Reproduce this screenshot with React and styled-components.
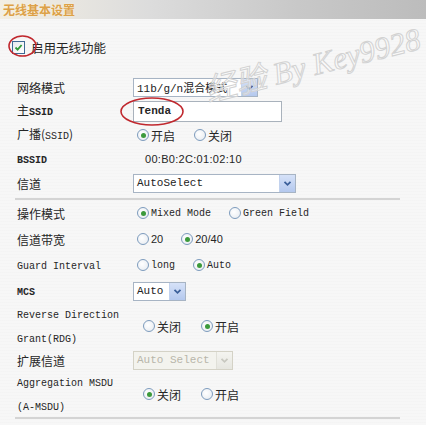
import React from 'react'
import styled, { createGlobalStyle } from 'styled-components'

const GlobalStyle = createGlobalStyle`
  html, body { margin: 0; padding: 0; background: #f6f6f6; }
  body { font-family: "Noto Sans CJK SC", "Liberation Sans", sans-serif; color: #262626; }
`

const Page = styled.div`
  position: relative;
  width: 426px;
  height: 425px;
  overflow: hidden;
  background: repeating-linear-gradient(to bottom, #f7f7f7 0px, #f7f7f7 2px, #f2f2f2 3px);
`

const TitleBar = styled.div`
  height: 19px;
  padding-left: 3px;
  display: flex;
  align-items: center;
  font-size: 12px;
  font-weight: bold;
  color: #dca148;
  text-shadow: 0 0 2px #fff3d8;
  background: linear-gradient(to right, #f3efe4 0%, #dcdcdc 35%, #c8c8c8 70%, #bcbcbc 100%);
`

const EnableRow = styled.div`
  height: 56px;
  display: flex;
  align-items: center;
  padding-left: 12px;
  gap: 6px;
  font-size: 12.5px;
`

const Mark = styled.span`
  position: relative;
  display: inline-flex;
`

const Ellipse = styled.svg`
  position: absolute;
  left: ${p => p.$x}px;
  top: ${p => p.$y}px;
  pointer-events: none;
  overflow: visible;
`

const Checkbox = styled.span`
  width: 11px;
  height: 11px;
  border: 1px solid #3f6a95;
  background: linear-gradient(135deg, #e6eaee, #ffffff);
  display: inline-flex;
  align-items: center;
  justify-content: center;
`

const Row = styled.div`
  height: ${p => p.$h || 24}px;
  display: flex;
  align-items: center;
  padding-left: 17px;
`

const Label = styled.div`
  width: 116px;
  flex: none;
  font-size: 12px;
  line-height: 21px;
`

const Mono = styled.span`
  font-family: "Liberation Mono", monospace;
  font-size: 10px;
  font-weight: ${p => (p.$bold ? 'bold' : 'normal')};
`

const Divider = styled.div`
  height: 2px;
  width: 385px;
  margin: ${p => p.$mt || 0}px 0 0 15px;
  background: #d4d4d4;
`

const SelectBox = styled.div`
  width: ${p => p.$w}px;
  height: 19px;
  box-sizing: border-box;
  display: flex;
  align-items: center;
  background: ${p => (p.$disabled ? '#f3f3ee' : '#fff')};
  border: 1px solid ${p => (p.$disabled ? '#d4d2c6' : '#a7b4c4')};
  color: ${p => (p.$disabled ? '#b8b6aa' : '#222')};
`

const SelectText = styled.div`
  flex: 1;
  padding-left: 3px;
  white-space: nowrap;
  overflow: hidden;
  font-family: "Liberation Mono", "Noto Sans CJK SC", monospace;
  font-size: 11px;
`

const SelectButton = styled.div`
  width: 15px;
  height: 17px;
  display: flex;
  align-items: center;
  justify-content: center;
  background: ${p => (p.$disabled
    ? 'linear-gradient(#f4f4f0, #e6e6e0)'
    : 'linear-gradient(#d6e2f8, #b4c8ee)')};
  border-left: 1px solid ${p => (p.$disabled ? '#e0e0d8' : '#c2d2ee')};
`

const TextInput = styled.div`
  width: 149px;
  height: 21px;
  box-sizing: border-box;
  border: 1px solid #a9b2bc;
  background: #fff;
  display: flex;
  align-items: center;
  padding-left: 4px;
  font-family: "Liberation Mono", monospace;
  font-size: 11px;
  font-weight: bold;
`

const RadioGroup = styled.div`
  display: flex;
  align-items: center;
  padding-left: ${p => p.$indent || 4}px;
  gap: ${p => p.$gap || 19}px;
`

const Option = styled.label`
  display: flex;
  align-items: center;
  gap: 2px;
  font-size: 12px;
`

const Circle = styled.span`
  width: 10px;
  height: 10px;
  border-radius: 50%;
  border: 1px solid #7d9bbd;
  background: radial-gradient(circle at 40% 40%, #ffffff, #e4e9ef);
  display: inline-flex;
  align-items: center;
  justify-content: center;
  &::after {
    content: '';
    width: 5px;
    height: 5px;
    border-radius: 50%;
    background: ${p => (p.$on ? '#3c9a3c' : 'transparent')};
  }
`

const OptText = styled.span`
  font-family: ${p => (p.$latin ? '"Liberation Sans", sans-serif' : '"Noto Sans CJK SC", sans-serif')};
  font-size: ${p => (p.$latin ? 11 : 12)}px;
`

const Value = styled.span`
  padding-left: 12px;
  font-family: "Liberation Sans", sans-serif;
  font-size: 11px;
  letter-spacing: 0.3px;
`

const Watermark = styled.div`
  position: absolute;
  left: 206px;
  top: 72px;
  transform: rotate(-14deg);
  transform-origin: left center;
  font-family: "Liberation Serif", "Noto Sans CJK SC", serif;
  font-style: italic;
  font-size: 31px;
  line-height: 40px;
  white-space: nowrap;
  color: rgba(255, 255, 255, 0.4);
  -webkit-text-stroke: 1px #d2d2d2;
  pointer-events: none;
`

function Chevron({ disabled }) {
  return (
    <svg width="9" height="7" viewBox="0 0 9 7">
      <path d="M1.5 1.8 L4.5 4.8 L7.5 1.8" fill="none" stroke={disabled ? '#c8c8c0' : '#3b5f9a'} strokeWidth="1.8" />
    </svg>
  )
}

function Select({ w, value, disabled }) {
  return (
    <SelectBox $w={w} $disabled={disabled}>
      <SelectText>{value}</SelectText>
      <SelectButton $disabled={disabled}><Chevron disabled={disabled} /></SelectButton>
    </SelectBox>
  )
}

function Radios({ options, selected, indent, gap, latin }) {
  return (
    <RadioGroup $indent={indent} $gap={gap}>
      {options.map((o, i) => (
        <Option key={o}>
          <Circle $on={i === selected} />
          {latin ? <Mono>{o}</Mono> : <OptText $latin={/^[0-9/]+$/.test(o)}>{o}</OptText>}
        </Option>
      ))}
    </RadioGroup>
  )
}

function RedEllipse({ x, y, w, h }) {
  return (
    <Ellipse $x={x} $y={y} width={w} height={h}>
      <ellipse cx={w / 2} cy={h / 2} rx={w / 2 - 1} ry={h / 2 - 1} fill="none" stroke="#c0282e" strokeWidth="1.6" />
    </Ellipse>
  )
}

export default function App() {
  return (
    <Page>
      <GlobalStyle />
      <TitleBar>无线基本设置</TitleBar>

      <EnableRow>
        <Mark>
          <Checkbox>
            <svg width="9" height="9" viewBox="0 0 9 9">
              <path d="M1.5 4.5 L3.6 6.6 L7.6 2" fill="none" stroke="#2f9a38" strokeWidth="1.8" />
            </svg>
          </Checkbox>
          <RedEllipse x={-4} y={-6} w={29} h={22} />
        </Mark>
        <span>启用无线功能</span>
      </EnableRow>

      <Row>
        <Label>网络模式</Label>
        <Select w={125} value="11b/g/n混合模式" />
      </Row>
      <Row>
        <Label>主<Mono $bold>SSID</Mono></Label>
        <Mark>
          <TextInput>Tenda</TextInput>
          <RedEllipse x={-13} y={-4} w={64} h={29} />
        </Mark>
      </Row>
      <Row>
        <Label>广播(<Mono>SSID</Mono>)</Label>
        <Radios options={['开启', '关闭']} selected={0} />
      </Row>
      <Row>
        <Label><Mono $bold>BSSID</Mono></Label>
        <Value>00:B0:2C:01:02:10</Value>
      </Row>
      <Row>
        <Label>信道</Label>
        <Select w={163} value="AutoSelect" />
      </Row>

      <Divider $mt={3} />

      <Row $h={26}>
        <Label>操作模式</Label>
        <Radios options={['Mixed Mode', 'Green Field']} selected={0} gap={18} latin />
      </Row>
      <Row $h={26}>
        <Label>信道带宽</Label>
        <Radios options={['20', '20/40']} selected={1} gap={18} />
      </Row>
      <Row $h={26}>
        <Label><Mono>Guard Interval</Mono></Label>
        <Radios options={['long', 'Auto']} selected={1} gap={18} latin />
      </Row>
      <Row $h={26}>
        <Label><Mono $bold>MCS</Mono></Label>
        <Select w={53} value="Auto" />
      </Row>
      <Row $h={44}>
        <Label><Mono>Reverse Direction<br />Grant(RDG)</Mono></Label>
        <Radios options={['关闭', '开启']} selected={1} indent={10} gap={20} />
      </Row>
      <Row>
        <Label>扩展信道</Label>
        <Select w={100} value="Auto Select" disabled />
      </Row>
      <Row $h={44}>
        <Label><Mono>Aggregation MSDU<br />(A-MSDU)</Mono></Label>
        <Radios options={['关闭', '开启']} selected={0} indent={10} gap={20} />
      </Row>

      <Divider $mt={1} />

      <Watermark>经验 By Key9928</Watermark>
    </Page>
  )
}
